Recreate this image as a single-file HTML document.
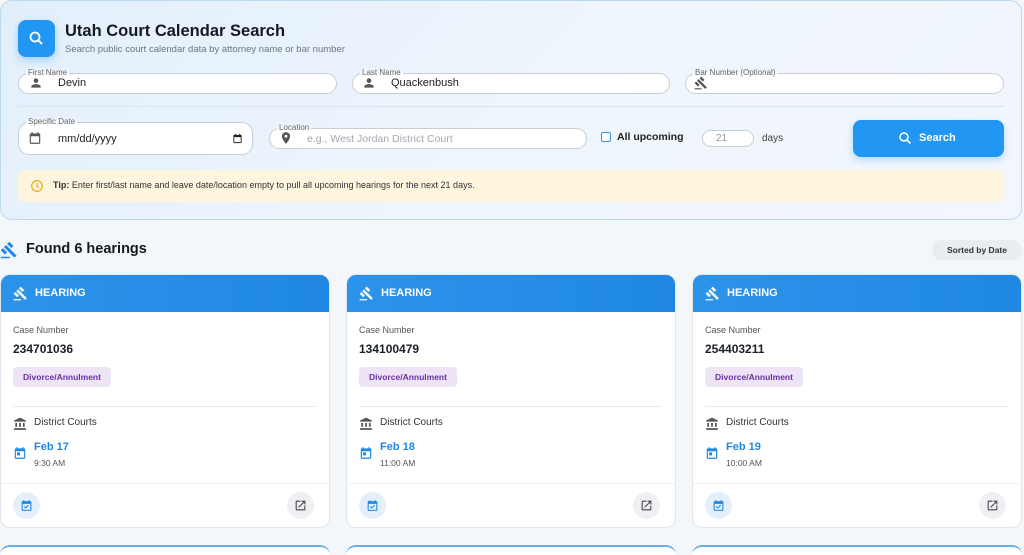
<!DOCTYPE html>
<html><head><meta charset="utf-8"><style>
*{box-sizing:border-box;margin:0;padding:0}
body{width:1024px;height:550px;overflow:hidden;background:#f4f7fa;font-family:"Liberation Sans",sans-serif;position:relative;color:#1d2533}
.a{position:absolute}
.panel{left:0;top:0;width:1022px;height:220px;border:1px solid #bcd9f0;border-radius:12px;background:linear-gradient(135deg,#e2effb 0%,#eef5fc 50%,#f2f7fd 100%)}
.logo{left:18px;top:20px;width:37px;height:37px;border-radius:8px;background:#2196f3;box-shadow:0 3px 8px rgba(33,150,243,.35)}
.inp{border:1px solid #c9ced5;border-radius:11px;background:#fff}
.lbl{font-size:8px;color:#666;background:linear-gradient(#eaf3fc,#fff);padding:0 2px;line-height:9px}
.txt{font-size:11px;color:#222}
.card{width:330px;height:254px;top:274px;background:#fff;border:1px solid #e3e7ec;border-radius:10px;overflow:hidden}
.ch{height:37px;background:linear-gradient(90deg,#2c93ea,#1f88e2);color:#fff;font-weight:bold;font-size:11px;padding:12px 0 0 34px;position:relative}
.cn{font-size:9px;color:#555;position:absolute;left:12px;top:50px}
.num{font-size:12px;font-weight:bold;position:absolute;left:12px;top:67px;color:#1b1f26}
.tag{position:absolute;left:12px;top:92px;width:98px;height:20px;background:#ede4f6;border-radius:4px;color:#6a2fa0;font-size:8.5px;font-weight:bold;text-align:center;line-height:20px}
.hr{position:absolute;left:12px;right:13px;top:131px;border-top:1px solid #e6e9ed}
.ct{position:absolute;left:33px;top:142px;font-size:10px;color:#333}
.dt{position:absolute;left:33px;top:166px;font-size:11px;font-weight:bold;color:#1e88e5}
.tm{position:absolute;left:33px;top:183px;font-size:8.5px;color:#555}
.ft{position:absolute;left:0;right:0;top:208px;border-top:1px solid #eef0f3}
.b1{position:absolute;left:12px;top:217px;width:27px;height:27px;border-radius:50%;background:#e3f0fc}
.b2{position:absolute;right:15px;top:217px;width:27px;height:27px;border-radius:50%;background:#eef0f3}
</style></head><body>
<div class="a panel"></div>
<div class="a logo"><svg width="37" height="37" viewBox="0 0 37 37"><circle cx="17" cy="17" r="4.5" fill="none" stroke="#fff" stroke-width="1.8"/><line x1="20.3" y1="20.3" x2="24" y2="24" stroke="#fff" stroke-width="2"/></svg></div>
<div class="a" style="left:65px;top:22px;font-size:16.5px;font-weight:bold;color:#151a22">Utah Court Calendar Search</div>
<div class="a" style="left:65px;top:44px;font-size:9.5px;color:#6b7480">Search public court calendar data by attorney name or bar number</div>

<div class="a inp" style="left:18px;top:73px;width:319px;height:21px"></div>
<div class="a lbl" style="left:26px;top:68px">First Name</div>
<svg class="a" style="left:29px;top:76px" width="14" height="14" viewBox="0 0 24 24"><path fill="#555" d="M12 12c2.2 0 4-1.8 4-4s-1.8-4-4-4-4 1.8-4 4 1.8 4 4 4zm0 2c-2.7 0-8 1.3-8 4v2h16v-2c0-2.7-5.3-4-8-4z"/></svg>
<div class="a txt" style="left:58px;top:77px">Devin</div>

<div class="a inp" style="left:352px;top:73px;width:318px;height:21px"></div>
<div class="a lbl" style="left:360px;top:68px">Last Name</div>
<svg class="a" style="left:362px;top:76px" width="14" height="14" viewBox="0 0 24 24"><path fill="#555" d="M12 12c2.2 0 4-1.8 4-4s-1.8-4-4-4-4 1.8-4 4 1.8 4 4 4zm0 2c-2.7 0-8 1.3-8 4v2h16v-2c0-2.7-5.3-4-8-4z"/></svg>
<div class="a txt" style="left:391px;top:77px">Quackenbush</div>

<div class="a inp" style="left:685px;top:73px;width:319px;height:21px"></div>
<div class="a lbl" style="left:693px;top:68px">Bar Number (Optional)</div>
<svg class="a" style="left:694px;top:76px" width="14" height="14" viewBox="0 0 24 24"><path fill="#555" d="M1 21h12v2H1zM5.2 8.1l2.8-2.8 14.1 14.1-2.8 2.8zM12.3 1l5.7 5.6-2.9 2.8-5.6-5.6zM3.8 9.5l5.7 5.6-2.9 2.9L1 12.3z"/></svg>

<div class="a" style="left:18px;top:106px;width:986px;border-top:1px solid #d8e4ee"></div>

<div class="a inp" style="left:18px;top:122px;width:235px;height:33px"></div>
<div class="a lbl" style="left:26px;top:117px">Specific Date</div>
<svg class="a" style="left:28px;top:131px" width="14" height="14" viewBox="0 0 24 24"><path fill="#555" d="M19 4h-1V2h-2v2H8V2H6v2H5a2 2 0 0 0-2 2v14a2 2 0 0 0 2 2h14a2 2 0 0 0 2-2V6a2 2 0 0 0-2-2zm0 16H5V9h14z"/></svg>
<div class="a txt" style="left:58px;top:133px">mm/dd/yyyy</div>
<svg class="a" style="left:232px;top:133px" width="11" height="11" viewBox="0 0 24 24"><path fill="#222" d="M19 4h-1V2h-2v2H8V2H6v2H5a2 2 0 0 0-2 2v14a2 2 0 0 0 2 2h14a2 2 0 0 0 2-2V6a2 2 0 0 0-2-2zm0 16H5V9h14z"/></svg>

<div class="a inp" style="left:269px;top:128px;width:318px;height:21px"></div>
<div class="a lbl" style="left:277px;top:123px">Location</div>
<svg class="a" style="left:279px;top:131px" width="14" height="14" viewBox="0 0 24 24"><path fill="#555" d="M12 2C8.1 2 5 5.1 5 9c0 5.2 7 13 7 13s7-7.8 7-13c0-3.9-3.1-7-7-7zm0 9.5a2.5 2.5 0 1 1 0-5 2.5 2.5 0 0 1 0 5z"/></svg>
<div class="a" style="left:307px;top:133px;font-size:10.5px;color:#a4a9b0">e.g., West Jordan District Court</div>

<div class="a" style="left:601px;top:132px;width:10px;height:10px;border:1.5px solid #3a93e0;border-radius:2px;background:#fff"></div>
<div class="a" style="left:617px;top:131px;font-size:10.5px;font-weight:bold;color:#222">All upcoming</div>
<div class="a inp" style="left:702px;top:130px;width:52px;height:17px;border-radius:9px"></div>
<div class="a" style="left:716px;top:133px;font-size:10px;color:#999">21</div>
<div class="a" style="left:762px;top:133px;font-size:10px;color:#444">days</div>

<div class="a" style="left:853px;top:120px;width:151px;height:37px;border-radius:8px;background:#2196f3;box-shadow:0 3px 8px rgba(33,150,243,.3);color:#fff;font-weight:bold;font-size:11px;padding:12px 0 0 66px">Search</div>
<svg class="a" style="left:898px;top:131px" width="14" height="14" viewBox="0 0 14 14"><circle cx="6" cy="6" r="4" fill="none" stroke="#fff" stroke-width="1.5"/><line x1="9" y1="9" x2="12.5" y2="12.5" stroke="#fff" stroke-width="1.6"/></svg>

<div class="a" style="left:18px;top:170px;width:986px;height:32px;border-radius:6px;background:#fdf5de"></div>
<svg class="a" style="left:30px;top:179px" width="14" height="14" viewBox="0 0 14 14"><circle cx="7" cy="7" r="5.3" fill="none" stroke="#f2b01e" stroke-width="1.3"/><path d="M7 4v3.3l2 1.3" fill="none" stroke="#f2b01e" stroke-width="1.2"/></svg>
<div class="a" style="left:53px;top:180px;font-size:9px;color:#333"><b>Tip:</b> Enter first/last name and leave date/location empty to pull all upcoming hearings for the next 21 days.</div>

<svg class="a" style="left:0;top:241px" width="18" height="18" viewBox="0 0 24 24"><path fill="#1e88e5" d="M1 21h12v2H1zM5.2 8.1l2.8-2.8 14.1 14.1-2.8 2.8zM12.3 1l5.7 5.6-2.9 2.8-5.6-5.6zM3.8 9.5l5.7 5.6-2.9 2.9L1 12.3z"/></svg>
<div class="a" style="left:26px;top:241px;font-size:14.5px;font-weight:bold;color:#151a22">Found 6 hearings</div>
<div class="a" style="left:932px;top:240px;width:90px;height:20px;border-radius:10px;background:#e9ecf0;font-size:8.5px;font-weight:bold;color:#333;text-align:center;line-height:20px">Sorted by Date</div>

<div class="a card" style="left:0">
<div class="ch"><svg style="position:absolute;left:12px;top:11px" width="15" height="15" viewBox="0 0 24 24"><path fill="#fff" d="M1 21h12v2H1zM5.2 8.1l2.8-2.8 14.1 14.1-2.8 2.8zM12.3 1l5.7 5.6-2.9 2.8-5.6-5.6zM3.8 9.5l5.7 5.6-2.9 2.9L1 12.3z"/></svg>HEARING</div>
<div class="cn">Case Number</div><div class="num">234701036</div><div class="tag">Divorce/Annulment</div><div class="hr"></div>
<svg style="position:absolute;left:12px;top:142px" width="14" height="14" viewBox="0 0 24 24"><path fill="#555" d="M4 10h3v7H4zm6.5 0h3v7h-3zM2 19h20v3H2zm15-9h3v7h-3zM12 1 2 6v2h20V6z"/></svg>
<div class="ct">District Courts</div>
<svg style="position:absolute;left:12px;top:171px" width="14" height="14" viewBox="0 0 24 24"><path fill="#1e88e5" d="M19 4h-1V2h-2v2H8V2H6v2H5a2 2 0 0 0-2 2v14a2 2 0 0 0 2 2h14a2 2 0 0 0 2-2V6a2 2 0 0 0-2-2zm0 16H5V9h14zM7 11h5v5H7z"/></svg>
<div class="dt">Feb 17</div><div class="tm">9:30 AM</div><div class="ft"></div>
<div class="b1"><svg style="margin:7px" width="13" height="13" viewBox="0 0 24 24"><path fill="#1e88e5" d="M19 4h-1V2h-2v2H8V2H6v2H5a2 2 0 0 0-2 2v14a2 2 0 0 0 2 2h14a2 2 0 0 0 2-2V6a2 2 0 0 0-2-2zm0 16H5V9h14zm-8.5-2-3.5-3.5 1.4-1.4 2.1 2.1 4.6-4.6 1.4 1.4z"/></svg></div>
<div class="b2"><svg style="margin:7px" width="13" height="13" viewBox="0 0 24 24"><path fill="#444" d="M19 19H5V5h7V3H5a2 2 0 0 0-2 2v14a2 2 0 0 0 2 2h14a2 2 0 0 0 2-2v-7h-2zM14 3v2h3.6l-9.8 9.8 1.4 1.4L19 6.4V10h2V3z"/></svg></div>
</div>

<div class="a card" style="left:346px">
<div class="ch"><svg style="position:absolute;left:12px;top:11px" width="15" height="15" viewBox="0 0 24 24"><path fill="#fff" d="M1 21h12v2H1zM5.2 8.1l2.8-2.8 14.1 14.1-2.8 2.8zM12.3 1l5.7 5.6-2.9 2.8-5.6-5.6zM3.8 9.5l5.7 5.6-2.9 2.9L1 12.3z"/></svg>HEARING</div>
<div class="cn">Case Number</div><div class="num">134100479</div><div class="tag">Divorce/Annulment</div><div class="hr"></div>
<svg style="position:absolute;left:12px;top:142px" width="14" height="14" viewBox="0 0 24 24"><path fill="#555" d="M4 10h3v7H4zm6.5 0h3v7h-3zM2 19h20v3H2zm15-9h3v7h-3zM12 1 2 6v2h20V6z"/></svg>
<div class="ct">District Courts</div>
<svg style="position:absolute;left:12px;top:171px" width="14" height="14" viewBox="0 0 24 24"><path fill="#1e88e5" d="M19 4h-1V2h-2v2H8V2H6v2H5a2 2 0 0 0-2 2v14a2 2 0 0 0 2 2h14a2 2 0 0 0 2-2V6a2 2 0 0 0-2-2zm0 16H5V9h14zM7 11h5v5H7z"/></svg>
<div class="dt">Feb 18</div><div class="tm">11:00 AM</div><div class="ft"></div>
<div class="b1"><svg style="margin:7px" width="13" height="13" viewBox="0 0 24 24"><path fill="#1e88e5" d="M19 4h-1V2h-2v2H8V2H6v2H5a2 2 0 0 0-2 2v14a2 2 0 0 0 2 2h14a2 2 0 0 0 2-2V6a2 2 0 0 0-2-2zm0 16H5V9h14zm-8.5-2-3.5-3.5 1.4-1.4 2.1 2.1 4.6-4.6 1.4 1.4z"/></svg></div>
<div class="b2"><svg style="margin:7px" width="13" height="13" viewBox="0 0 24 24"><path fill="#444" d="M19 19H5V5h7V3H5a2 2 0 0 0-2 2v14a2 2 0 0 0 2 2h14a2 2 0 0 0 2-2v-7h-2zM14 3v2h3.6l-9.8 9.8 1.4 1.4L19 6.4V10h2V3z"/></svg></div>
</div>

<div class="a card" style="left:692px">
<div class="ch"><svg style="position:absolute;left:12px;top:11px" width="15" height="15" viewBox="0 0 24 24"><path fill="#fff" d="M1 21h12v2H1zM5.2 8.1l2.8-2.8 14.1 14.1-2.8 2.8zM12.3 1l5.7 5.6-2.9 2.8-5.6-5.6zM3.8 9.5l5.7 5.6-2.9 2.9L1 12.3z"/></svg>HEARING</div>
<div class="cn">Case Number</div><div class="num">254403211</div><div class="tag">Divorce/Annulment</div><div class="hr"></div>
<svg style="position:absolute;left:12px;top:142px" width="14" height="14" viewBox="0 0 24 24"><path fill="#555" d="M4 10h3v7H4zm6.5 0h3v7h-3zM2 19h20v3H2zm15-9h3v7h-3zM12 1 2 6v2h20V6z"/></svg>
<div class="ct">District Courts</div>
<svg style="position:absolute;left:12px;top:171px" width="14" height="14" viewBox="0 0 24 24"><path fill="#1e88e5" d="M19 4h-1V2h-2v2H8V2H6v2H5a2 2 0 0 0-2 2v14a2 2 0 0 0 2 2h14a2 2 0 0 0 2-2V6a2 2 0 0 0-2-2zm0 16H5V9h14zM7 11h5v5H7z"/></svg>
<div class="dt">Feb 19</div><div class="tm">10:00 AM</div><div class="ft"></div>
<div class="b1"><svg style="margin:7px" width="13" height="13" viewBox="0 0 24 24"><path fill="#1e88e5" d="M19 4h-1V2h-2v2H8V2H6v2H5a2 2 0 0 0-2 2v14a2 2 0 0 0 2 2h14a2 2 0 0 0 2-2V6a2 2 0 0 0-2-2zm0 16H5V9h14zm-8.5-2-3.5-3.5 1.4-1.4 2.1 2.1 4.6-4.6 1.4 1.4z"/></svg></div>
<div class="b2"><svg style="margin:7px" width="13" height="13" viewBox="0 0 24 24"><path fill="#444" d="M19 19H5V5h7V3H5a2 2 0 0 0-2 2v14a2 2 0 0 0 2 2h14a2 2 0 0 0 2-2v-7h-2zM14 3v2h3.6l-9.8 9.8 1.4 1.4L19 6.4V10h2V3z"/></svg></div>
</div>

<div class="a" style="left:0;top:545px;width:330px;height:10px;border-top:2px solid #6aaee6;border-radius:10px 10px 0 0;background:#fff"></div>
<div class="a" style="left:346px;top:545px;width:330px;height:10px;border-top:2px solid #6aaee6;border-radius:10px 10px 0 0;background:#fff"></div>
<div class="a" style="left:692px;top:545px;width:330px;height:10px;border-top:2px solid #6aaee6;border-radius:10px 10px 0 0;background:#fff"></div>
</body></html>
